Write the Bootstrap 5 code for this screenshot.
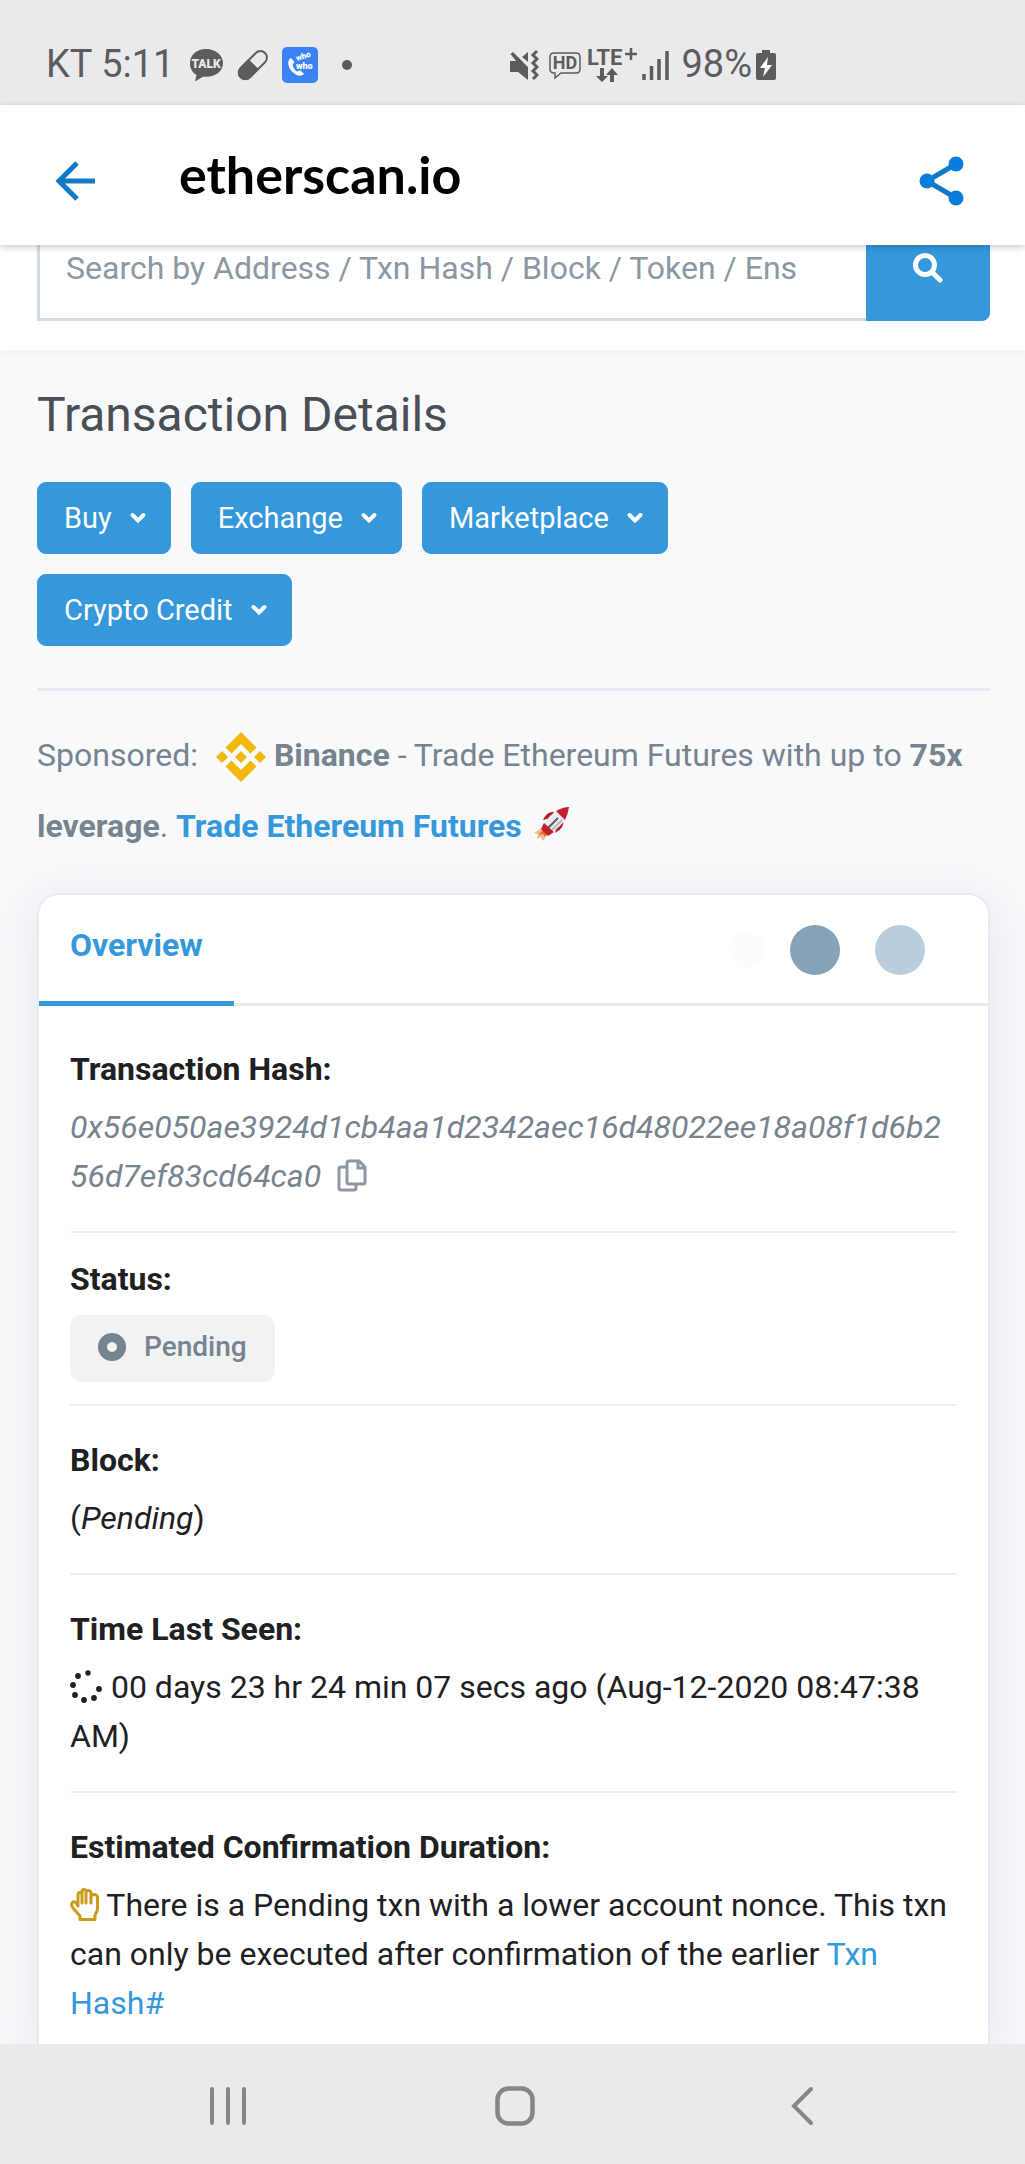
<!DOCTYPE html>
<html lang="en">
<head>
<meta charset="utf-8">
<meta name="viewport" content="width=device-width, initial-scale=1">
<title>Transaction Details</title>
<link href="https://cdn.jsdelivr.net/npm/bootstrap@5.3.0/dist/css/bootstrap.min.css" rel="stylesheet">
<style>
:root { --brand: #3498db; --muted: #77838f; --line: #e7eaf3; }
body { font-family: Roboto, sans-serif; font-size: 32px; line-height: 49px; color: #1e2022; background: #f8f9fb; }
a { color: var(--brand); text-decoration: none; }
svg { display: block; flex-shrink: 0; }
svg.inline-icon { display: inline-block; vertical-align: -5px; }
.status-bar { height: 105px; padding: 24px 249px 0 46px; background: #eaeaec; color: #5c5c5e; font-size: 38px; }
.app-bar { height: 140px; padding: 12px 61px 0 55px; box-shadow: 0 2px 7px rgba(0,0,0,.22); z-index: 5; }
.app-title { font-family: Lato, sans-serif; font-size: 52px; font-weight: 700; line-height: 60px; color: #000; margin: 0 auto 14px 84px; }
.icon-btn { border: 0; padding: 0; background: none; }
.search-area { padding: 0 35px 29px 37px; box-shadow: 0 2px 10px rgba(140,152,164,.10); }
.search-area .input-group { height: 107px; margin-top: -31px; }
.search-area .form-control { border: 3px solid #d5dae2; border-right: 0; border-radius: 0; padding: 0 26px; font-size: 32px; color: #1e2022; }
.search-area .form-control::placeholder { color: #8c98a4; }
.search-area .btn { width: 124px; border-radius: 0 8px 8px 0; }
.btn-brand { --bs-btn-bg: var(--brand); --bs-btn-color: #fff; --bs-btn-border-color: var(--brand); --bs-btn-hover-bg: #2384c6; --bs-btn-hover-color: #fff; --bs-btn-active-bg: #2384c6; --bs-btn-active-color: #fff; }
.page-area { padding: 36px 35px 0 37px; }
.page-title { font-size: 48px; line-height: 58px; font-weight: 400; color: #4a4f55; margin-bottom: 38px; }
.menu-row { gap: 20px; padding-bottom: 42px; border-bottom: 3px solid var(--line); }
.menu-row .btn { height: 72px; padding: 0 23px 0 26px; border-radius: 9px; font-size: 29px; line-height: 40px; gap: 17px; }
.sponsor { margin: 29px 0 31px; line-height: 71px; color: var(--muted); }
.sponsor .coin { margin: 0 8px 0 10px; vertical-align: -16px; }
.tx-card { border: 2px solid var(--line); border-bottom: 0; border-radius: 22px 22px 0 0; background: #fff; box-shadow: 0 10px 40px 10px rgba(140,152,164,.13); }
.tab-row { height: 111px; border-bottom: 3px solid #e7eaec; padding: 2px 63px 0 0; gap: 35px; }
.tab-link { align-self: stretch; padding: 24px 31px 0; margin: 0 auto -3px 0; border-bottom: 5px solid var(--brand); font-weight: 700; }
.dot { width: 50px; height: 50px; border-radius: 50%; background: #b9cddd; }
.dot-dark { background: #87a1b6; }
.dot-faint { width: 36px; height: 36px; background: #fcfcfd; margin-right: -10px; }
.tx-list { padding: 9px 31px 0; margin: 0; }
.tx-item { padding: 30px 0; border-bottom: 2px solid #eceef1; }
.tx-item:last-child { border: 0; padding-bottom: 13px; }
.tx-item.tight { padding: 22px 0; }
.tx-item dt { margin-bottom: 9px; font-weight: 700; }
.tx-item.tight dt { margin-bottom: 11px; }
.tx-item dd { margin: 0; }
.hash { color: var(--muted); overflow-wrap: anywhere; }
.state { height: 67px; padding: 0 28px 4px 28px; gap: 18px; border-radius: 12px; background: #f1f2f4; color: var(--muted); font-size: 28px; font-weight: 500; }
.nav-keys { height: 120px; padding: 3px 80px 0 84px; background: #eaeaec; position: relative; }
.nav-keys .icon-btn { flex: 1; }
</style>
<script src="https://cdn.jsdelivr.net/npm/bootstrap@5.3.0/dist/js/bootstrap.bundle.min.js"></script>
</head>
<body class="d-flex flex-column min-vh-100">

<div class="status-bar d-flex align-items-center">
  <span class="me-3">KT 5:11</span>
  <svg width="34" height="36" viewBox="2 0 34 36"><path fill="#5c5c5e" d="M18 2C8 2 2 8.500 2 16c0 6 2.500 9.500 6.500 12L7 34.500 15.500 29.600C26 31 35 25 35 16 35 8.500 28 2 18 2z"/><text x="18" y="21" text-anchor="middle" font-family="Roboto" font-weight="900" font-size="12" fill="#eaeaec">TALK</text></svg>
  <svg class="mx-3" width="26" height="32" viewBox="2 0 26 32" overflow="visible"><g transform="rotate(45 15 16)"><rect x="8.500" y="-1" width="13" height="34" rx="6.500" fill="none" stroke="#5c5c5e" stroke-width="2"/><path d="M7.500 15h15v12a7.500 7.500 0 0 1-15 0z" fill="#5c5c5e"/></g></svg>
  <svg width="36" height="36" viewBox="0 0 36 36"><rect width="36" height="36" rx="5" fill="#3b82f6"/><path d="M9 11c-4 2-3.500 9 1 13.500s9 5.500 12 2.500l-4-4-3 1.500c-2-1-4-4-4.500-6.500L12.500 15z" fill="#fff"/><text x="15" y="14" transform="rotate(-18 15 14)" font-family="Roboto" font-weight="900" font-size="8" fill="#fff">who</text><text x="14" y="22" font-family="Roboto" font-weight="900" font-size="9" fill="#fff">who</text></svg>
  <svg class="me-auto" width="58" height="12" viewBox="0 0 58 12"><circle cx="29" cy="6" r="5" fill="#5c5c5e"/></svg>
  <svg width="30" height="32" viewBox="0 0 30 32" fill="#5c5c5e"><path d="M1 12h6L1.500 5 4 3l15 15v13L9 23H1zM13 8l6-5v10z"/><path d="M28 2l-4 4 4 4-4 4 4 4-4 4 4 4-4 4" fill="none" stroke="#5c5c5e" stroke-width="3"/></svg>
  <svg class="ms-2 me-1" width="36" height="32" viewBox="0 0 36 32"><path d="M7 4h22q4 0 4 4v12q0 4-4 4H14l-6 5v-5H7q-4 0-4-4V8q0-4 4-4z" fill="none" stroke="#5c5c5e" stroke-width="1.500"/><text x="18" y="20" text-anchor="middle" font-family="Roboto" font-weight="700" font-size="18" fill="#5c5c5e">HD</text></svg>
  <svg class="me-1" width="50" height="48" viewBox="0 -6 50 48"><text x="0" y="18" font-family="Roboto" font-weight="700" font-size="22" fill="#5c5c5e">LTE</text><path d="M38 7h12M44 1v12" stroke="#5c5c5e" stroke-width="2.500"/><path d="M13 21v8h-4l6 6 6-6h-4v-8zM23 35v-7h-4l6-7 6 7h-4v7z" fill="#5c5c5e"/></svg>
  <svg class="me-2" width="28" height="32" viewBox="0 0 28 32"><path d="M3 25v6M10.500 17v14M18 10v21M26 2v29" stroke="#5c5c5e" stroke-width="3.500"/></svg>
  <span class="ms-1 me-1">98%</span>
  <svg width="20" height="30" viewBox="0 0 20 30"><path d="M6 0h8v3h4q2 0 2 2v23q0 2-2 2H2q-2 0-2-2V5q0-2 2-2h4z" fill="#5c5c5e"/><path d="M12 7L4 18h5l-2 9 9-12h-5z" fill="#fff"/></svg>
</div>

<header class="app-bar d-flex align-items-center bg-white position-relative">
  <button type="button" class="icon-btn" aria-label="Back"><svg width="40" height="40" viewBox="0 0 40 40" fill="none" stroke="#1279c6" stroke-width="5"><path d="M22 2L4 20l18 18M4 20h36"/></svg></button>
  <div class="app-title">etherscan.io</div>
  <button type="button" class="icon-btn" aria-label="Share"><svg width="50" height="50" viewBox="0 0 50 50"><path d="M42 8L13 25l29 17" fill="none" stroke="#1279c6" stroke-width="5"/><g fill="#0a7ddc"><circle cx="42" cy="8" r="7.500"/><circle cx="13" cy="25" r="7.500"/><circle cx="42" cy="42" r="7.500"/></g></svg></button>
</header>

<form class="search-area bg-white" role="search">
  <div class="input-group flex-nowrap">
    <input type="text" class="form-control" aria-label="Search" placeholder="Search by Address / Txn Hash / Block / Token / Ens">
    <button type="button" class="btn btn-brand d-flex align-items-center justify-content-center" aria-label="Search"><svg width="30" height="30" viewBox="0 0 30 30" fill="none" stroke="#fff" stroke-width="5"><circle cx="12" cy="12" r="9.500"/><path d="M19 19l8 8" stroke-linecap="round"/></svg></button>
  </div>
</form>

<main class="page-area flex-grow-1 d-flex flex-column">
  <h1 class="page-title">Transaction Details</h1>
  <div class="menu-row d-flex flex-wrap">
    <button type="button" class="btn btn-brand d-flex align-items-center">Buy<svg width="18" height="12" viewBox="0 0 18 12" fill="none" stroke="#fff" stroke-width="4"><path d="M3.500 3L9 8.500 14.500 3" stroke-linecap="round"/></svg></button>
    <button type="button" class="btn btn-brand d-flex align-items-center">Exchange<svg width="18" height="12" viewBox="0 0 18 12" fill="none" stroke="#fff" stroke-width="4"><path d="M3.500 3L9 8.500 14.500 3" stroke-linecap="round"/></svg></button>
    <button type="button" class="btn btn-brand d-flex align-items-center">Marketplace<svg width="18" height="12" viewBox="0 0 18 12" fill="none" stroke="#fff" stroke-width="4"><path d="M3.500 3L9 8.500 14.500 3" stroke-linecap="round"/></svg></button>
    <div class="w-100 d-flex">
      <button type="button" class="btn btn-brand d-flex align-items-center">Crypto Credit<svg width="18" height="12" viewBox="0 0 18 12" fill="none" stroke="#fff" stroke-width="4"><path d="M3.500 3L9 8.500 14.500 3" stroke-linecap="round"/></svg></button>
    </div>
  </div>

  <p class="sponsor">Sponsored: <svg class="inline-icon coin" width="50" height="50" viewBox="0 0 50 50" fill="#f0b90b"><path d="M25 0l15.500 15.500-6 6L25 12l-9.500 9.500-6-6zM25 50L9.500 34.500l6-6L25 38l9.500-9.500 6 6zM6 19l6 6-6 6-6-6zM44 19l6 6-6 6-6-6zM25 19l6 6-6 6-6-6z"/></svg><b>Binance</b> - Trade Ethereum Futures with up to <b>75x</b> <b>leverage</b>. <a href="#"><b>Trade Ethereum Futures</b></a> <svg class="inline-icon ms-1" width="36" height="36" viewBox="0 0 36 36"><path d="M9 21L0 27l4 1-1 5 4-2 2 4 6-9z" fill="#f5b98c"/><path d="M10 23l-6 6 5-1 2 3 4-5z" fill="#e06a3a"/><path d="M20 6q-7-1-11 8l8-2zM29 14q2 8-8 13l2-8z" fill="#b01e28"/><path d="M9 20C14 10 22 3 35 1 34 13 26 22 16 27z" fill="#e9e8ea"/><path d="M22 5q7-4 13-4-1 7-4 13z" fill="#c3202f"/><path d="M10 17l-3 6 7 7 6-4z" fill="#c3202f"/><path d="M14 22L24 12" stroke="#5f5b61" stroke-width="2"/><path d="M18 24L28 14" stroke="#b9b6bb" stroke-width="2"/></svg></p>

  <section class="tx-card flex-grow-1">
    <div class="tab-row d-flex align-items-center">
      <a class="tab-link" href="#overview">Overview</a>
      <span class="dot dot-faint"></span><span class="dot dot-dark"></span><span class="dot"></span>
    </div>
    <dl class="tx-list" id="overview">
      <div class="tx-item">
        <dt>Transaction Hash:</dt>
        <dd class="hash"><i>0x56e050ae3924d1cb4aa1d2342aec16d48022ee18a08f1d6b256d7ef83cd64ca0</i> <button type="button" class="icon-btn ms-2" aria-label="Copy hash"><svg class="inline-icon" width="30" height="33" viewBox="0 0 30 33" fill="none" stroke="#8c98a4" stroke-width="3"><path d="M11 2h11l6 6v15q0 2-2 2H12q-2 0-2-2V4q0-2 2-2zM21 2v7h7M10 8H4q-2 0-2 2v19q0 2 2 2h13q2 0 2-2v-4"/></svg></button></dd>
      </div>
      <div class="tx-item tight">
        <dt>Status:</dt>
        <dd class="d-flex"><span class="state d-inline-flex align-items-center"><svg width="28" height="28" viewBox="0 0 28 28"><circle cx="14" cy="14" r="9.500" fill="none" stroke="#77838f" stroke-width="9"/></svg>Pending</span></dd>
      </div>
      <div class="tx-item">
        <dt>Block:</dt>
        <dd>(<i>Pending</i>)</dd>
      </div>
      <div class="tx-item">
        <dt>Time Last Seen:</dt>
        <dd><svg class="inline-icon" width="33" height="33" viewBox="0 0 33 33" fill="#1e2022"><circle cx="18" cy="3" r="2.700"/><circle cx="8" cy="6" r="2.900"/><circle cx="3" cy="15" r="2.900"/><circle cx="5" cy="25" r="2.900"/><circle cx="14" cy="30" r="2.900"/><circle cx="24" cy="28" r="2.900"/><circle cx="29" cy="19" r="2.900"/></svg> 00 days 23 hr 24 min 07 secs ago (Aug-12-2020 08:47:38 AM)</dd>
      </div>
      <div class="tx-item">
        <dt>Estimated Confirmation Duration:</dt>
        <dd><svg class="inline-icon" width="29" height="33" viewBox="0 0 29 33" fill="none" stroke="#cc9a1a" stroke-width="3" stroke-linejoin="round" stroke-linecap="round"><path d="M8 18V7q0-2.500 2-2.500T12 7v8V4q0-2.500 2-2.500T16 4v11V5q0-2.500 2.200-2.500T21 5v10V9q0-2.500 3-2.500T27.500 9v11q0 4-2.500 7v4.500H10V28L3 20q-2.500-4-.5-5.500T6 15l2 3"/></svg> There is a Pending txn with a lower account nonce. This txn can only be executed after confirmation of the earlier <a href="#">Txn Hash#</a></dd>
      </div>
    </dl>
  </section>
</main>

<nav class="nav-keys d-flex align-items-center" aria-label="System">
  <button type="button" class="icon-btn d-flex justify-content-center" aria-label="Recent apps"><svg width="38" height="40" viewBox="0 0 38 40" stroke="#868688" stroke-width="4" stroke-linecap="round"><path d="M3 3v34M19 3v34M35 3v34"/></svg></button>
  <button type="button" class="icon-btn d-flex justify-content-center" aria-label="Home"><svg width="40" height="40" viewBox="0 0 40 40" fill="none" stroke="#868688" stroke-width="4.500"><rect x="2.500" y="2.500" width="35" height="35" rx="11"/></svg></button>
  <button type="button" class="icon-btn d-flex justify-content-center" aria-label="Back"><svg width="24" height="40" viewBox="0 0 24 40" fill="none" stroke="#868688" stroke-width="4" stroke-linecap="round"><path d="M21 3L4 20l17 17"/></svg></button>
</nav>
</body>
</html>
